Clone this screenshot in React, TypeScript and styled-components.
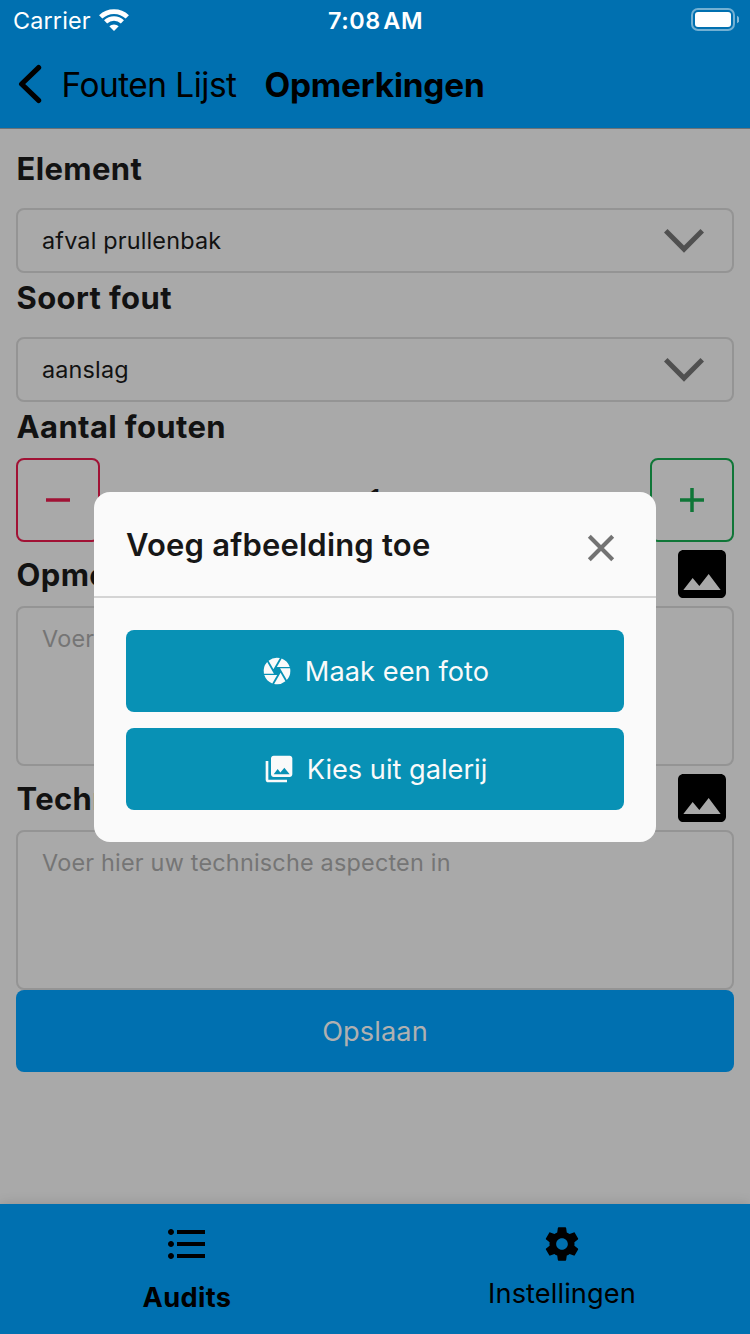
import React from 'react';
import styled, { createGlobalStyle } from 'styled-components';
import { MdImage, MdCamera, MdPhotoLibrary, MdFormatListBulleted } from 'react-icons/md';

const blue = '#0070b0';

const GlobalStyle = createGlobalStyle`
  * { box-sizing: border-box; }
  body { margin: 0; font-family: Inter, "Liberation Sans", sans-serif; color: #121212; }
  button { font-family: inherit; cursor: pointer; }
  svg { display: block; flex: none; }
`;

const Screen = styled.div`
  width: 750px;
  height: 1334px;
  display: flex;
  flex-direction: column;
  background: #a9a9a9;
  overflow: hidden;
`;

const Label = styled.span<{ $size: number; $weight?: number; $spacing?: number; $word?: number; $drop?: number }>`
  display: block;
  padding-top: ${(p) => p.$drop ?? 2}px;
  font-size: ${(p) => p.$size}px;
  font-weight: ${(p) => p.$weight ?? 400};
  letter-spacing: ${(p) => p.$spacing ?? 0}px;
  word-spacing: ${(p) => p.$word ?? 0}px;
  line-height: 1.2;
  white-space: nowrap;
`;

const Header = styled.header`
  height: 129px;
  background: ${blue};
  border-bottom: 1px solid #6c7276;
`;

const StatusBar = styled.div`
  height: 40px;
  padding: 0 12px 0 13px;
  display: grid;
  grid-template-columns: 1fr auto 1fr;
  align-items: center;
  color: #fff;
`;

const Carrier = styled.div`
  display: flex;
  align-items: center;
  gap: 8px;
`;

const BatterySlot = styled.div`
  margin-right: -1px;
  padding-bottom: 1px;
  display: flex;
  justify-content: flex-end;
`;

const NavBar = styled.nav`
  height: 88px;
  padding-left: 18px;
  display: flex;
  align-items: center;
  color: #000;
`;

const BackLabel = styled.div`
  margin: 0 28px 0 17.5px;
  display: flex;
`;

const Form = styled.main`
  flex: 1;
  padding: 15px 16px 0;
  display: flex;
  flex-direction: column;
`;

const HeadingRow = styled.div<{ $gap: number; $height?: number }>`
  height: ${(p) => p.$height ?? 50}px;
  margin-bottom: ${(p) => p.$gap}px;
  padding-left: 0.5px;
  flex: none;
  display: flex;
  align-items: center;
  justify-content: space-between;
  color: #121212;
  > svg { color: #000; }
`;

const Select = styled.div`
  height: 65px;
  flex: none;
  padding: 0 28px 0 24px;
  display: flex;
  align-items: center;
  justify-content: space-between;
  border: 2px solid #949494;
  border-radius: 8px;
`;

const Stepper = styled.div`
  height: 84px;
  flex: none;
  display: flex;
  align-items: center;
  justify-content: space-between;
`;

const StepButton = styled.button<{ $color: string }>`
  width: 84px;
  height: 84px;
  padding: 0;
  display: flex;
  align-items: center;
  justify-content: center;
  background: transparent;
  color: ${(p) => p.$color};
  border: 2px solid ${(p) => p.$color};
  border-radius: 8px;
`;

const TextArea = styled.div`
  height: 160px;
  flex: none;
  padding: 15px 24px;
  border: 2px solid #949494;
  border-radius: 8px;
  color: #757575;
`;

const SaveButton = styled.button`
  height: 82px;
  flex: none;
  display: flex;
  align-items: center;
  justify-content: center;
  border: 0;
  border-radius: 8px;
  background: ${blue};
  color: #b0b0b0;
`;

const TabBar = styled.footer`
  height: 130px;
  display: flex;
  background: ${blue};
  color: #000;
  box-shadow: 0 0 12px rgba(0, 0, 0, 0.14);
`;

const Tab = styled.div<{ $gap: number }>`
  flex: 1;
  padding: 16px 1px 0 0;
  display: flex;
  flex-direction: column;
  align-items: center;
  gap: ${(p) => p.$gap}px;
`;

const TabIcon = styled.div`
  height: 48px;
  display: flex;
  align-items: center;
`;

const Overlay = styled.div`
  position: fixed;
  top: 0;
  left: 0;
  width: 750px;
  height: 1334px;
  display: flex;
  align-items: center;
  justify-content: center;
`;

const Dialog = styled.section`
  width: 562px;
  border-radius: 16px;
  background: #fafafa;
  color: #171717;
`;

const DialogHeader = styled.div`
  height: 106px;
  padding: 0 41px 0 32px;
  display: flex;
  align-items: center;
  justify-content: space-between;
  border-bottom: 2px solid #d4d4d4;
  > svg { margin-top: 8px; }
`;

const DialogBody = styled.div`
  padding: 32px;
  display: flex;
  flex-direction: column;
  gap: 16px;
`;

const ActionButton = styled.button`
  height: 82px;
  display: flex;
  align-items: center;
  justify-content: center;
  gap: 12px;
  border: 0;
  border-radius: 8px;
  background: #0891b5;
  color: #fafafa;
`;

const WifiIcon = () => (
  <svg width="30" height="22" viewBox="0 0 30 22" fill="none" stroke="#fff">
    <path d="M1.7 7.9a19.3 19.3 0 0 1 26.6 0" strokeWidth="4.7" />
    <path d="M6.6 12.8a12.2 12.2 0 0 1 16.8 0" strokeWidth="4.5" />
    <path d="M15 22l-4.7-4.7a6.8 6.8 0 0 1 9.4 0z" fill="#fff" stroke="none" />
  </svg>
);

const BatteryIcon = () => (
  <svg width="48" height="23" viewBox="0 0 48 23">
    <rect x="1" y="1" width="42" height="21" rx="6" fill="none" stroke="#fff" strokeOpacity="0.45" strokeWidth="2" />
    <rect x="4" y="4" width="36" height="15" rx="3" fill="#fff" />
    <path d="M46 7.7a4.2 4.2 0 0 1 0 7.6z" fill="#fff" fillOpacity="0.5" />
  </svg>
);

const BackIcon = () => (
  <svg width="26" height="40" viewBox="0 0 26 40" fill="none" stroke="#000" strokeWidth="5.2" strokeLinecap="round" strokeLinejoin="round">
    <path d="M20.6 3.6L3.6 20l17 16.4" />
  </svg>
);

const ChevronDown = () => (
  <svg width="40" height="24" viewBox="0 0 40 24" fill="#505050">
    <path d="M36.5 0L20 16.4 3.5 0 0 3.6 20 23.8 40 3.6z" />
  </svg>
);

const StepIcon = ({ plus }: { plus?: boolean }) => (
  <svg width="24" height="24" viewBox="0 0 24 24" stroke="currentColor" strokeWidth="3.5">
    <path d={plus ? 'M0 12h24M12 0v24' : 'M0 12h24'} />
  </svg>
);

const CloseIcon = () => (
  <svg width="28" height="28" viewBox="0 0 28 28" stroke="#737373" strokeWidth="4.1">
    <path d="M2.3 2.3l23.4 23.4M25.7 2.3L2.3 25.7" />
  </svg>
);

const GearIcon = () => (
  <svg width="40" height="40" viewBox="0 0 24 24" fill="currentColor">
    <path d="M19.43 12.98c.04-.32.07-.64.07-.98s-.03-.66-.07-.98l2.11-1.65c.19-.15.24-.42.12-.64l-2-3.46c-.12-.22-.39-.3-.61-.22l-2.49 1c-.52-.4-1.08-.73-1.69-.98l-.38-2.65C14.46 2.18 14.25 2 14 2h-4c-.25 0-.46.18-.49.42l-.38 2.65c-.61.25-1.17.59-1.69.98l-2.49-1c-.23-.09-.49 0-.61.22l-2 3.46c-.13.22-.07.49.12.64l2.11 1.65c-.04.32-.07.65-.07.98s.03.66.07.98l-2.11 1.65c-.19.15-.24.42-.12.64l2 3.46c.12.22.39.3.61.22l2.49-1c.52.4 1.08.73 1.69.98l.38 2.65c.03.24.24.42.49.42h4c.25 0 .46-.18.49-.42l.38-2.65c.61-.25 1.17-.59 1.69-.98l2.49 1c.23.09.49 0 .61-.22l2-3.46c.12-.22.07-.49-.12-.64l-2.11-1.65zM12 15.5c-1.93 0-3.5-1.57-3.5-3.5s1.57-3.5 3.5-3.5 3.5 1.57 3.5 3.5-1.57 3.5-3.5 3.5z" />
  </svg>
);

const Heading = ({ children, drop = 0 }: { children: string; drop?: number }) => (
  <Label $size={31} $weight={700} $spacing={0.38} $drop={drop}>{children}</Label>
);

export default function App() {
  return (
    <>
      <GlobalStyle />
      <Screen>
        <Header>
          <StatusBar>
            <Carrier>
              <Label $size={23.4} $spacing={0.15}>Carrier</Label>
              <WifiIcon />
            </Carrier>
            <Label $size={23.4} $weight={600} $spacing={0.6} $word={-4}>7:08 AM</Label>
            <BatterySlot><BatteryIcon /></BatterySlot>
          </StatusBar>
          <NavBar>
            <BackIcon />
            <BackLabel><Label $size={33.4} $spacing={-0.5}>Fouten Lijst</Label></BackLabel>
            <Label $size={33.4} $weight={700} $spacing={-0.2}>Opmerkingen</Label>
          </NavBar>
        </Header>
        <Form>
          <HeadingRow $gap={14}><Heading>Element</Heading></HeadingRow>
          <Select>
            <Label $size={23.4} $spacing={0.17}>afval prullenbak</Label>
            <ChevronDown />
          </Select>
          <HeadingRow $gap={14}><Heading>Soort fout</Heading></HeadingRow>
          <Select>
            <Label $size={23.4} $spacing={0.17}>aanslag</Label>
            <ChevronDown />
          </Select>
          <HeadingRow $gap={6}><Heading>Aantal fouten</Heading></HeadingRow>
          <Stepper>
            <StepButton $color="#a11235"><StepIcon /></StepButton>
            <Label $size={28} $drop={2}>1</Label>
            <StepButton $color="#0f7637"><StepIcon plus /></StepButton>
          </Stepper>
          <HeadingRow $height={64} $gap={0}><Heading drop={2}>Opmerking</Heading><MdImage size={64} /></HeadingRow>
          <TextArea><Label $size={23.4} $spacing={0.21}>Voer hier uw opmerking in</Label></TextArea>
          <HeadingRow $height={64} $gap={0}><Heading drop={2}>Technische aspecten</Heading><MdImage size={64} /></HeadingRow>
          <TextArea><Label $size={23.4} $spacing={0.21}>Voer hier uw technische aspecten in</Label></TextArea>
          <SaveButton><Label $size={27.2} $spacing={0.1}>Opslaan</Label></SaveButton>
        </Form>
        <TabBar>
          <Tab $gap={14}>
            <TabIcon><MdFormatListBulleted size={48} /></TabIcon>
            <Label $size={27.2} $weight={700} $spacing={0.35} $drop={0}>Audits</Label>
          </Tab>
          <Tab $gap={10}>
            <TabIcon><GearIcon /></TabIcon>
            <Label $size={27.2} $spacing={0.1} $drop={0}>Instellingen</Label>
          </Tab>
        </TabBar>
      </Screen>
      <Overlay>
        <Dialog>
          <DialogHeader>
            <Label $size={31} $weight={600} $spacing={0.2}>Voeg afbeelding toe</Label>
            <CloseIcon />
          </DialogHeader>
          <DialogBody>
            <ActionButton><MdCamera size={32} /><Label $size={27.2} $spacing={0.06}>Maak een foto</Label></ActionButton>
            <ActionButton><MdPhotoLibrary size={32} /><Label $size={27.2}>Kies uit galerij</Label></ActionButton>
          </DialogBody>
        </Dialog>
      </Overlay>
    </>
  );
}
